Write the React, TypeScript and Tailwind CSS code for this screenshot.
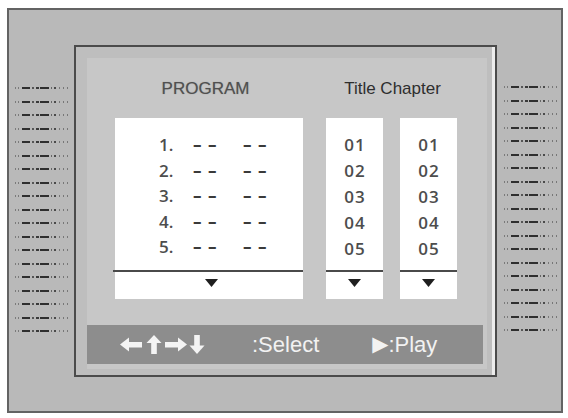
import React from "react";

// Program-play menu of a DVD player: speaker grilles on both sides, the
// on-screen menu in the middle with the program list and title/chapter pickers.

const segs: [number, number, string][] = [
  [0, 1, "#7a7a7a"],
  [3, 1, "#7a7a7a"],
  [7, 8, "#2e2e2e"],
  [17, 2, "#555"],
  [21, 3, "#3a3a3a"],
  [25, 9, "#2e2e2e"],
  [36, 1, "#666"],
  [39, 2, "#4a4a4a"],
  [44, 1, "#777"],
  [48, 1, "#777"],
  [52, 1, "#777"],
];

function Grille({ className }: { className: string }) {
  return (
    <div className={"flex w-[53px] flex-col gap-[11.5px] " + className}>
      {Array.from({ length: 19 }).map((_, i) => (
        <svg key={i} width="53" height="2" viewBox="0 0 53 2" className="block">
          {segs.map(([x, w, c], j) => (
            <rect key={j} x={x} y={0} width={w} height={2} fill={c} />
          ))}
        </svg>
      ))}
    </div>
  );
}

function Down() {
  return (
    <svg width="13" height="8" viewBox="0 0 13 8" className="block">
      <polygon points="0,0 13,0 6.5,8" fill="#1f1f1f" />
    </svg>
  );
}

function Picker({ rows }: { rows: string[] }) {
  return (
    <div className="flex h-[181px] w-[57px] flex-col bg-white">
      <div className="h-[152px] pt-[14px]">
        {rows.map((r) => (
          <div key={r} className="h-[26px] pl-[1px] text-center leading-[26px] tracking-[1px]">
            {r}
          </div>
        ))}
      </div>
      <div className="h-[2px] bg-[#4a4a4a]" />
      <div className="flex flex-1 items-center justify-center pb-[5px]">
        <Down />
      </div>
    </div>
  );
}

function Arrows() {
  return (
    <svg width="86" height="19" viewBox="0 0 86 19" className="block">
      <g fill="#f4f4f4">
        <polygon points="0,9.5 9,2.5 9,16.5" />
        <rect x="8" y="7" width="14" height="5.5" />
        <polygon points="34,0 26.5,8 41.5,8" />
        <rect x="31.2" y="7" width="5.6" height="12" />
        <rect x="45" y="7" width="14" height="5.5" />
        <polygon points="67,9.5 58,2.5 58,16.5" />
        <rect x="74.2" y="0" width="5.6" height="11" />
        <polygon points="69.5,10.5 84.5,10.5 77,19" />
      </g>
    </svg>
  );
}

export default function App() {
  const nums = ["01", "02", "03", "04", "05"];
  return (
    <div className="h-[418px] w-[568px] overflow-hidden bg-white font-['Liberation_Sans',Arial,sans-serif]">
      <div className="ml-[7px] mt-[8px] flex h-[405px] w-[556px] items-start border-2 border-[#636363] bg-[#b9b9b9]">
        <Grille className="ml-[6px] mt-[77px]" />

        <div className="ml-[6px] mt-[35px] h-[332px] w-[423px] border-2 border-[#4b4b4b] bg-[#bebebe] pl-[11px] pt-[11px] shadow-[inset_-3px_0_0_#ececec]">
          <div className="flex h-[311px] w-[400px] flex-col bg-[#c7c7c7]">
            <div className="flex h-[60px] items-center pl-[28px] pt-[1px] text-[17px]">
              <div className="w-[188px] pr-[7px] text-center text-[#505050] [text-shadow:0_0_1px_#8a8a8a]">
                PROGRAM
              </div>
              <div className="ml-[23px] w-[131px] pl-[2px] text-center text-[#2e2e2e]">Title Chapter</div>
            </div>

            <div className="flex pl-[28px] font-['Open_Sans',sans-serif] text-[17px] font-semibold text-[#4d4d4d]">
              <div className="flex h-[181px] w-[188px] flex-col bg-white">
                <div className="h-[152px] pt-[14px]">
                  {[1, 2, 3, 4, 5].map((n) => (
                    <div key={n} className="flex h-[25.5px] pl-[44px] leading-[25.5px]">
                      <span className="w-[34px]">{n}.</span>
                      <span className="w-[50px] font-bold tracking-[1px] text-[#3a3a3a]">– –</span>
                      <span className="font-bold tracking-[1px] text-[#3a3a3a]">– –</span>
                    </div>
                  ))}
                </div>
                <div className="-ml-[2px] h-[2px] bg-[#4a4a4a]" />
                <div className="flex flex-1 items-center justify-center pb-[5px] pl-[4px]">
                  <Down />
                </div>
              </div>
              <div className="ml-[23px]">
                <Picker rows={nums} />
              </div>
              <div className="ml-[17px]">
                <Picker rows={nums} />
              </div>
            </div>

            <div className="mt-[26px] flex h-[39px] w-[396px] items-center bg-[#8d8d8d] pl-[33px] text-[22px] text-[#f2f2f2]">
              <Arrows />
              <span className="ml-[46px]">:Select</span>
              <span className="ml-[53px] font-['DejaVu_Sans',sans-serif] text-[21px]">▶</span>
              <span>:Play</span>
            </div>
          </div>
        </div>

        <Grille className="ml-[7px] mt-[76px]" />
      </div>
    </div>
  );
}
